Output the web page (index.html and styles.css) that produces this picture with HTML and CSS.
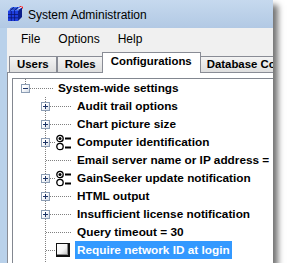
FILE: index.html
```html
<!DOCTYPE html>
<html lang="en">
<head>
  <title>System Administration</title>
  <meta charset="utf-8">
  <link rel="stylesheet" href="styles.css">
</head>
<body>
  <div class="window">
    <div class="titlebar">
      <svg class="app-icon" width="16" height="16" viewBox="0 0 16 16">
        <path d="M1 5 L5 1 L15 1 L11 5 Z" fill="#3d6af2"/>
        <path d="M11 5 L15 1 L15 11 L11 15 Z" fill="#0c1f8c"/>
        <rect x="1" y="5" width="10" height="10" fill="#1f3fe0"/>
        <path d="M1 8.5 H11 M1 11.8 H11 M4.3 5 V15 M7.6 5 V15" stroke="#0a1470" stroke-width="0.8"/>
        <path d="M3 3 H13 M7 1 L3 5 M11 1 L7 5" stroke="#0a1470" stroke-width="0.7"/>
        <path d="M12 0 L16 0 L16 3 Z" fill="#e0202a"/>
        <path d="M10.5 3.5 L15.5 0.5" stroke="#fff" stroke-width="1"/>
      </svg>
      <span class="title">System Administration</span>
    </div>

    <div class="client">
      <ul class="menubar">
        <li>File</li>
        <li>Options</li>
        <li>Help</li>
      </ul>

      <div class="tabs">
        <div class="tab">Users</div>
        <div class="tab">Roles</div>
        <div class="tab active">Configurations</div>
        <div class="tab">Database Connections</div>
      </div>

      <div class="panel">
        <div class="tree">
          <div class="node root">
            <span class="exp"></span>
            <span class="stub"></span>
            <span class="label">System-wide settings</span>
          </div>
          <div class="children">
            <div class="node">
              <span class="exp plus"></span>
              <span class="stub"></span>
              <span class="label">Audit trail options</span>
            </div>
            <div class="node">
              <span class="exp plus"></span>
              <span class="stub"></span>
              <span class="label">Chart picture size</span>
            </div>
            <div class="node with-icon">
              <span class="exp plus"></span>
              <span class="stub"></span>
              <svg class="icon" width="16" height="17" viewBox="0 0 16 17">
                <circle cx="4" cy="4.5" r="3.2" fill="#fff" stroke="#000" stroke-width="1.3"/>
                <circle cx="4" cy="4.5" r="1.5" fill="#000"/>
                <circle cx="4" cy="12.5" r="3.2" fill="#fff" stroke="#000" stroke-width="1.3"/>
                <rect x="9" y="3.5" width="6" height="2" fill="#000"/>
                <rect x="9" y="12.5" width="6" height="2" fill="#000"/>
              </svg>
              <span class="label">Computer identification</span>
            </div>
            <div class="node leaf">
              <span class="stub"></span>
              <span class="label">Email server name or IP address =</span>
            </div>
            <div class="node with-icon">
              <span class="exp plus"></span>
              <span class="stub"></span>
              <svg class="icon" width="16" height="17" viewBox="0 0 16 17">
                <circle cx="4" cy="4.5" r="3.2" fill="#fff" stroke="#000" stroke-width="1.3"/>
                <circle cx="4" cy="4.5" r="1.5" fill="#000"/>
                <circle cx="4" cy="12.5" r="3.2" fill="#fff" stroke="#000" stroke-width="1.3"/>
                <rect x="9" y="3.5" width="6" height="2" fill="#000"/>
                <rect x="9" y="12.5" width="6" height="2" fill="#000"/>
              </svg>
              <span class="label">GainSeeker update notification</span>
            </div>
            <div class="node">
              <span class="exp plus"></span>
              <span class="stub"></span>
              <span class="label">HTML output</span>
            </div>
            <div class="node">
              <span class="exp plus"></span>
              <span class="stub"></span>
              <span class="label">Insufficient license notification</span>
            </div>
            <div class="node leaf">
              <span class="stub"></span>
              <span class="label">Query timeout = 30</span>
            </div>
            <div class="node leaf with-icon">
              <span class="stub"></span>
              <svg class="icon" width="16" height="14" viewBox="0 0 16 14">
                <defs>
                  <linearGradient id="cb" x1="0" y1="0" x2="1" y2="1">
                    <stop offset="0" stop-color="#ffffff"/>
                    <stop offset="0.6" stop-color="#f4f4f4"/>
                    <stop offset="1" stop-color="#c8c8c8"/>
                  </linearGradient>
                </defs>
                <rect x="0" y="0" width="14" height="14" fill="#111"/>
                <rect x="1" y="1" width="11" height="11" fill="#8a8a8a"/>
                <rect x="1" y="1" width="10" height="10" fill="url(#cb)"/>
              </svg>
              <span class="label selected">Require network ID at login</span>
            </div>
            <div class="node leaf">
              <span class="stub"></span>
              <span class="label">Show login warning</span>
            </div>
          </div>
        </div>
      </div>
    </div>
  </div>
</body>
</html>
```

FILE: styles.css
```css
* {
  box-sizing: border-box;
}

body {
  margin: 0;
  background: #ffffff;
  font-family: "Liberation Sans", Arial, sans-serif;
  color: #000000;
  overflow: hidden;
}

.window {
  width: 273px;
  height: 263px;
  display: flex;
  flex-direction: column;
  background: #b9d1ea;
  box-shadow: 5px 5px 6px rgba(0, 0, 0, 0.55);
  overflow: hidden;
}

/* title bar */

.titlebar {
  height: 28px;
  flex: none;
  display: flex;
  align-items: center;
  padding-left: 7px;
  background: linear-gradient(#c6d9ee, #b2c9e4);
}

.app-icon {
  flex: none;
}

.title {
  margin-left: 5px;
  font-size: 12px;
  margin-top: 1px;
}

/* client area */

.client {
  flex: 1;
  margin-left: 7px;
  display: flex;
  flex-direction: column;
  background: #f0f0f0;
  min-height: 0;
}

.menubar {
  list-style: none;
  margin: 0;
  padding: 0 0 0 5px;
  height: 22px;
  display: flex;
  font-size: 12px;
  line-height: 22px;
}

.menubar li {
  padding: 0 9px;
}

/* tabs */

.tabs {
  height: 22px;
  flex: none;
  display: flex;
  align-items: flex-end;
  padding-left: 2px;
  font-size: 11.4px;
  font-weight: bold;
  white-space: nowrap;
}

.tab {
  height: 16px;
  line-height: 15px;
  padding: 0 7px;
  border: 1px solid #898c95;
  border-bottom: none;
  background: linear-gradient(#f4f4f4, #dedede);
}

.tab.active {
  position: relative;
  z-index: 1;
  height: 21px;
  line-height: 17px;
  margin: 0 -2px -1px;
  padding: 0 8px;
  background: #ffffff;
}

.panel {
  flex: 1;
  min-height: 0;
  padding: 5px 0 0 4px;
  background: #ffffff;
  border-top: 1px solid #898c95;
  border-left: 1px solid #898c95;
}

/* tree */

.tree {
  height: 100%;
  border-top: 1px solid #828790;
  border-left: 1px solid #828790;
  font-size: 11.8px;
  font-weight: bold;
  white-space: nowrap;
}

.node {
  display: flex;
  align-items: center;
  height: 18px;
  padding-left: 28px;
}

.root {
  padding-left: 8px;
  background: repeating-linear-gradient(#808080 0 1px, transparent 1px 2px) 12px 0 / 1px 5px no-repeat;
}

.children {
  background: repeating-linear-gradient(#808080 0 1px, transparent 1px 2px) 32px 0 / 1px 100% no-repeat;
}

.exp {
  position: relative;
  flex: none;
  width: 9px;
  height: 9px;
  border: 1px solid #8c9db4;
  background: linear-gradient(135deg, #ffffff 35%, #d3dbe6);
}

.exp::before,
.exp::after {
  content: "";
  position: absolute;
  background: #1d3466;
}

.exp::before {
  left: 1px;
  top: 3px;
  width: 5px;
  height: 1px;
}

.exp.plus::after {
  left: 3px;
  top: 1px;
  width: 1px;
  height: 5px;
}

.stub {
  flex: none;
  width: 22px;
  height: 1px;
  margin-right: 3px;
  margin-top: 1px;
  background: repeating-linear-gradient(90deg, #808080 0 1px, transparent 1px 2px);
}

.root .stub {
  width: 23px;
}

.leaf {
  padding-left: 33px;
}

.leaf .stub {
  width: 26px;
}

.with-icon .stub {
  width: 5px;
  margin-right: 1px;
}

.leaf.with-icon .stub {
  width: 9px;
}

.icon {
  flex: none;
  margin-right: 3px;
}

.label {
  padding: 0 2px;
  line-height: 18px;
}

.label.selected {
  background: #3399ff;
  color: #ffffff;
}
```
